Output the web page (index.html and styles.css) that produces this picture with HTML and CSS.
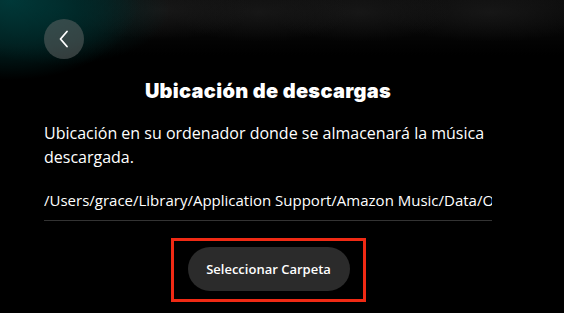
FILE: index.html
```html
<!DOCTYPE html>
<html lang="es">
<head>
<meta charset="utf-8">
<link rel="stylesheet" href="styles.css">
</head>
<body>
<div class="page">
  <div class="topbar">
    <button class="back" aria-label="Atrás">
      <svg width="40" height="40" viewBox="0 0 40 40"><path d="M23 12.5 L16.5 20 L23 27.5" fill="none" stroke="#fff" stroke-width="1.8" stroke-linecap="round" stroke-linejoin="round"/></svg>
    </button>
  </div>
  <main class="panel">
    <h1 class="title">Ubicación de descargas</h1>
    <p class="desc">Ubicación en su ordenador donde se almacenará la música descargada.</p>
    <div class="path">/Users/grace/Library/Application Support/Amazon Music/Data/Offline</div>
    <div class="actions">
      <div class="highlight">
        <button class="select">Seleccionar Carpeta</button>
      </div>
    </div>
  </main>
</div>
</body>
</html>
```

FILE: styles.css
```css
* { box-sizing: border-box; }
html, body { margin: 0; height: 100%; }
body {
  background:
    radial-gradient(ellipse 130px 80px at 10px 0px, rgba(0,58,58,0.95), rgba(0,42,42,0.75) 55%, rgba(0,0,0,0) 100%),
    radial-gradient(ellipse 110px 55px at 60px 10px, rgba(0,45,45,0.8), rgba(0,0,0,0) 100%),
    radial-gradient(ellipse 90px 30px at 160px 10px, rgba(30,30,30,0.7), rgba(0,0,0,0) 100%),
    radial-gradient(ellipse 90px 30px at 260px 12px, rgba(28,28,28,0.7), rgba(0,0,0,0) 100%),
    radial-gradient(ellipse 90px 30px at 360px 12px, rgba(28,28,28,0.7), rgba(0,0,0,0) 100%),
    radial-gradient(ellipse 110px 30px at 490px 12px, rgba(28,28,28,0.7), rgba(0,0,0,0) 100%),
    linear-gradient(180deg, #0c0c0c 0px, #060606 30px, #000 55px),
    #000;
  color: #fff;
  font-family: "Open Sans", "Liberation Sans", sans-serif;
  overflow: hidden;
}
.page { width: 564px; height: 313px; padding: 19px 0 0 44px; }
.topbar { height: 40px; display: flex; }
.back {
  width: 40px; height: 40px; border-radius: 50%;
  border: 0; padding: 0; margin: 0;
  background: rgba(95,100,100,0.55);
  display: flex; align-items: center; justify-content: center;
}
.panel { width: 448px; display: flex; flex-direction: column; }
.title {
  margin: 20px 0 0; text-align: center;
  font-family: "Inter", "Open Sans", sans-serif;
  font-weight: 900; font-size: 20px; line-height: 24px; letter-spacing: 0.3px;
}
.desc {
  margin: 18px 0 0; font-size: 16px; line-height: 24px;
}
.path {
  margin-top: 20px; font-size: 15px; line-height: 22px;
  white-space: nowrap; overflow: hidden;
  padding-bottom: 9px; border-bottom: 1px solid #333;
}
.actions { display: flex; justify-content: center; margin-top: 17px; }
.highlight { border: 3px solid #f02a14; padding: 6px 13px 8px 14px; }
.select {
  width: 162px; height: 44px; border-radius: 22px; border: 0;
  background: #2b2b2b; color: #fff;
  font-family: "Open Sans", sans-serif; font-weight: 600; font-size: 13px;
}
```
